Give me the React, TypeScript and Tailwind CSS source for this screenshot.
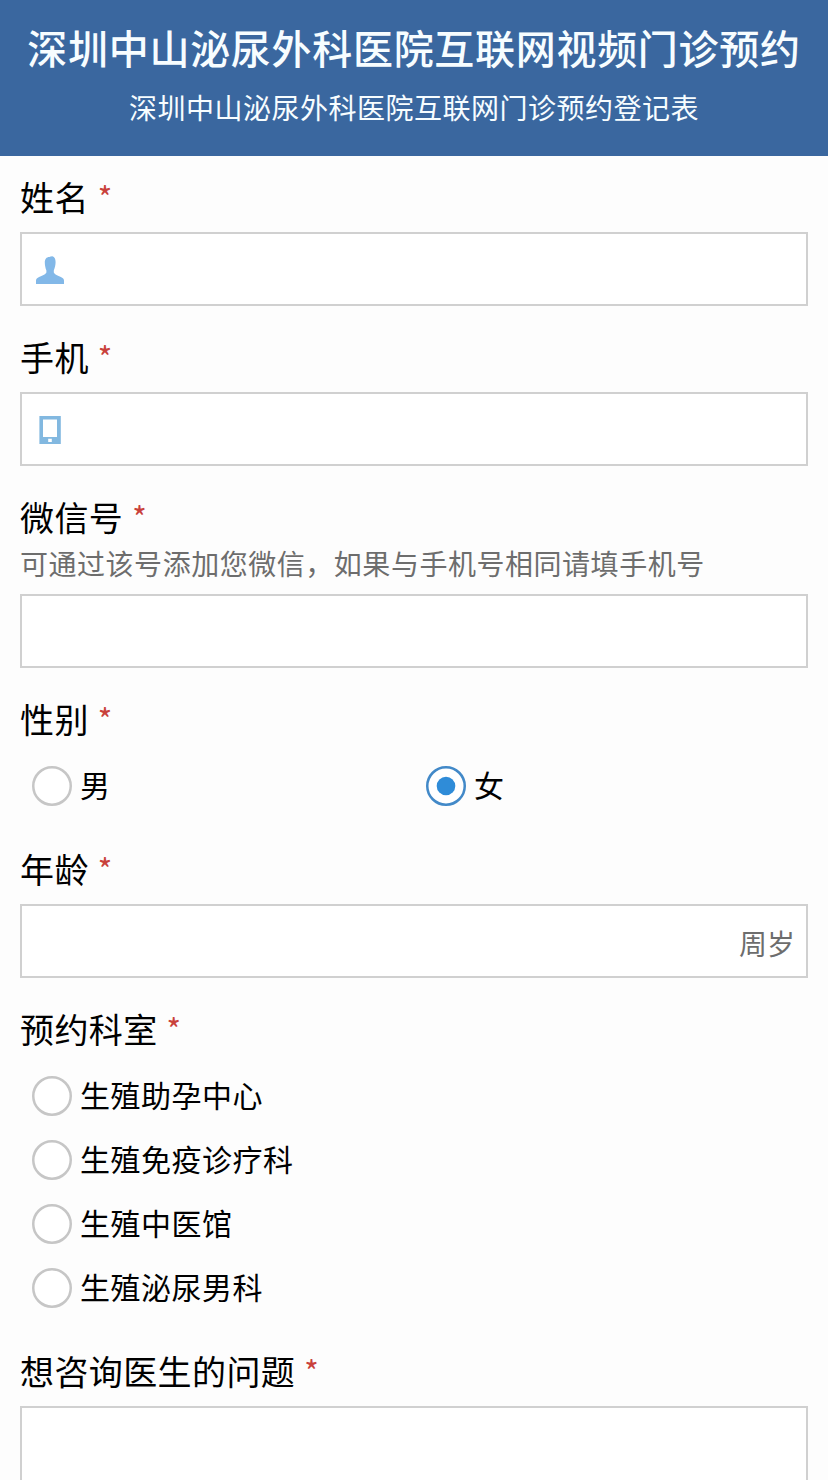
import React, { useState } from "react";

const departments = [
  "生殖助孕中心",
  "生殖免疫诊疗科",
  "生殖中医馆",
  "生殖泌尿男科",
];

function UserIcon() {
  return (
    <svg width="28" height="28" viewBox="0 0 28 28" fill="#82b8e8">
      <path d="M14.6 0.6L16.4 0.2C18.6 1 19.6 3 19.6 6C19.6 9 18.8 12 17.8 14.6V16.4C18.4 18 20.4 19 22.6 20C26 21.6 28 22.4 28 24.4V28H0V24.4C0 22.4 2 21.6 5.4 20C7.6 19 9.8 18 10.4 16.4V14.6C9.4 12 8.8 9 8.8 6.2C8.8 3 10.6 0.8 13.4 0.9Z" />
    </svg>
  );
}

function PhoneIcon() {
  return (
    <svg width="28" height="28" viewBox="0 0 28 28" fill="#82b8e0">
      <path
        fillRule="evenodd"
        d="M3.4 0H24.8V28H3.4ZM7 3.4V21H21V3.4ZM12.2 22.8V26H15.8V22.8Z"
      />
    </svg>
  );
}

interface FieldProps {
  label: string;
  hint?: string;
  children: React.ReactNode;
}

function Field({ label, hint, children }: FieldProps) {
  return (
    <div className="mb-5">
      <div className="flex h-[66px] items-center pb-[5px] text-[34px] leading-[61px] tracking-[0.4px] text-black">
        {label}
        <span className="ml-[9px] text-[31px] tracking-normal text-[#c9413b]">
          *
        </span>
      </div>
      {hint && (
        <p className="-mt-0.5 mb-[18px] text-[28px] leading-[26px] tracking-[0.53px] whitespace-nowrap text-[#6d6d6d]">
          {hint}
        </p>
      )}
      {children}
    </div>
  );
}

interface TextInputProps {
  name: string;
  icon?: React.ReactNode;
  unit?: string;
}

function TextInput({ name, icon, unit }: TextInputProps) {
  return (
    <div className="flex h-[74px] items-center border-2 border-[#d0d0d0] bg-white pt-0.5 pr-[11px] pl-[14px]">
      {icon}
      <input
        name={name}
        className="h-full min-w-0 flex-1 bg-transparent px-3 text-[30px] outline-none"
      />
      {unit && (
        <span className="pt-0.5 text-[28px] leading-none text-[#6d6d6d]">
          {unit}
        </span>
      )}
    </div>
  );
}

interface RadioProps {
  name: string;
  label: string;
  checked: boolean;
  onChange: () => void;
}

function Radio({ name, label, checked, onChange }: RadioProps) {
  return (
    <label className="flex h-16 items-center pl-3 text-[30px] tracking-[0.5px] text-black">
      <input
        type="radio"
        name={name}
        checked={checked}
        onChange={onChange}
        className="sr-only"
      />
      <svg width="40" height="40" viewBox="0 0 40 40" className="mr-2">
        <circle
          cx="20"
          cy="20"
          r="18.75"
          fill="#fff"
          stroke={checked ? "#4289c8" : "#c6c6c6"}
          strokeWidth="2.5"
        />
        {checked && <circle cx="20" cy="20" r="9.3" fill="#2f8cd8" />}
      </svg>
      <span className="pb-1">{label}</span>
    </label>
  );
}

function App() {
  const [gender, setGender] = useState("女");
  const [department, setDepartment] = useState("");

  return (
    <div className="h-[1480px] overflow-hidden bg-[#fdfdfd] font-['Noto_Sans_CJK_SC',sans-serif]">
      <header className="flex h-[156px] flex-col items-center bg-[#3a679f] pt-[17px] whitespace-nowrap text-[#f7fdff]">
        <h1 className="text-[40px] leading-[60px] font-medium tracking-[0.7px]">
          深圳中山泌尿外科医院互联网视频门诊预约
        </h1>
        <p className="mt-2.5 text-[28px] leading-10 tracking-[0.5px]">
          深圳中山泌尿外科医院互联网门诊预约登记表
        </p>
      </header>

      <form className="px-5 pt-[10px]">
        <Field label="姓名">
          <TextInput name="name" icon={<UserIcon />} />
        </Field>
        <Field label="手机">
          <TextInput name="phone" icon={<PhoneIcon />} />
        </Field>
        <Field
          label="微信号"
          hint="可通过该号添加您微信，如果与手机号相同请填手机号"
        >
          <TextInput name="wechat" />
        </Field>
        <Field label="性别">
          <div className="grid grid-cols-2">
            {["男", "女"].map((item) => (
              <Radio
                key={item}
                name="gender"
                label={item}
                checked={gender === item}
                onChange={() => setGender(item)}
              />
            ))}
          </div>
        </Field>
        <Field label="年龄">
          <TextInput name="age" unit="周岁" />
        </Field>
        <Field label="预约科室">
          {departments.map((item) => (
            <Radio
              key={item}
              name="department"
              label={item}
              checked={department === item}
              onChange={() => setDepartment(item)}
            />
          ))}
        </Field>
        <Field label="想咨询医生的问题">
          <textarea
            name="question"
            className="block h-[180px] w-full resize-none border-2 border-[#d0d0d0] bg-white p-3 text-[30px] outline-none"
          />
        </Field>
      </form>
    </div>
  );
}

export default App;
